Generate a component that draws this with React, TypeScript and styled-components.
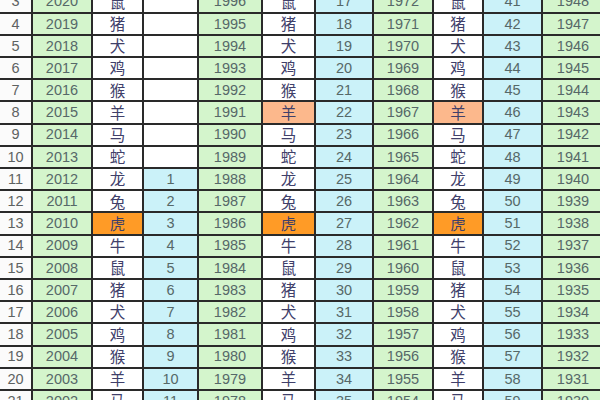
import { Fragment } from "react";
import styled, { createGlobalStyle } from "styled-components";

const GlobalStyle = createGlobalStyle`
    html, body {
        margin: 0;
        padding: 0;
        width: 600px;
        height: 400px;
        overflow: hidden;
        background: #ffffff;
    }
`

type Kind = "index" | "year" | "zodiac" | "num" | "blank";
type Mark = "none" | "light" | "strong";

const Sheet = styled.div`
    display: grid;
    grid-template-columns: 31px 58px 49px 53px 62px 51px 56px 58px 48px 57px 60px;
    grid-auto-rows: 20.2px;
    column-gap: 2px;
    row-gap: 2px;
    width: 620px;
    margin-top: -8.5px;
    background: #2a2a2a;
`

const backgrounds: Record<Kind, string> = {
    index: "#fbfbfb",
    year: "#d4f5cc",
    zodiac: "#ffffff",
    num: "#cbf2f9",
    blank: "#ffffff",
}

const marks: Record<Mark, string | null> = {
    none: null,
    light: "#fcb88c",
    strong: "#ff9b26",
}

const Cell = styled.div<{ $kind: Kind; $mark?: Mark }>`
    display: flex;
    align-items: center;
    justify-content: center;
    background: ${({ $kind, $mark }) => marks[$mark || "none"] || backgrounds[$kind]};
    color: ${({ $kind }) => ($kind === "zodiac" ? "#40406a" : $kind === "index" ? "#5e6262" : "#566868")};
    font-family: ${({ $kind }) =>
        $kind === "zodiac" ? `"Noto Sans CJK SC", "Noto Sans", sans-serif` : `"Liberation Sans", Arial, sans-serif`};
    font-size: ${({ $kind }) => ($kind === "zodiac" ? "15.5px" : "14.5px")};
    line-height: 1;
`

const zodiac = ["鼠", "猪", "犬", "鸡", "猴", "羊", "马", "蛇", "龙", "兔", "虎", "牛"];

const rows = Array.from({ length: 19 }, (_, i) => {
    const n = i + 3;
    const step = n - 3;
    return {
        n,
        sign: zodiac[step % 12],
        years: [2020 - step, 1996 - step, 1972 - step, 1948 - step],
        nums: [step >= 8 ? String(step - 7) : "", String(17 + step), String(41 + step)],
    };
});

// 羊 row is shaded only in the right two blocks, 虎 row in all three
const markFor = (n: number, col: number): Mark => {
    if (n === 13) return "strong";
    if (n === 8 && col > 0) return "light";
    return "none";
}

const App = () => {
    return <>
        <GlobalStyle />
        <Sheet>
            {rows.map((row) => (
                <Fragment key={row.n}>
                    <Cell $kind="index">{row.n}</Cell>
                    <Cell $kind="year">{row.years[0]}</Cell>
                    <Cell $kind="zodiac" $mark={markFor(row.n, 0)}>{row.sign}</Cell>
                    <Cell $kind={row.nums[0] ? "num" : "blank"}>{row.nums[0]}</Cell>
                    <Cell $kind="year">{row.years[1]}</Cell>
                    <Cell $kind="zodiac" $mark={markFor(row.n, 1)}>{row.sign}</Cell>
                    <Cell $kind="num">{row.nums[1]}</Cell>
                    <Cell $kind="year">{row.years[2]}</Cell>
                    <Cell $kind="zodiac" $mark={markFor(row.n, 2)}>{row.sign}</Cell>
                    <Cell $kind="num">{row.nums[2]}</Cell>
                    <Cell $kind="year">{row.years[3]}</Cell>
                </Fragment>
            ))}
        </Sheet>
    </>
}

export default App;
